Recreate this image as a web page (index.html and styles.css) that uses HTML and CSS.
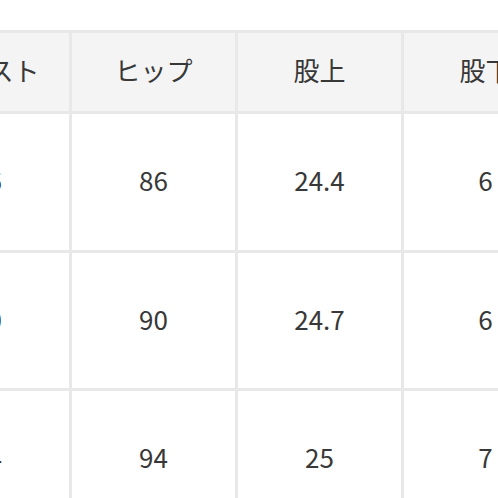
FILE: index.html
```html
<!DOCTYPE html>
<html lang="ja">
<head>
<meta charset="utf-8">
<link rel="stylesheet" href="styles.css">
</head>
<body>
<div class="viewport">
  <div class="size-table">
    <div class="cell head">ウエスト</div>
    <div class="cell head">ヒップ</div>
    <div class="cell head">股上</div>
    <div class="cell head">股下</div>
    <div class="cell">66</div>
    <div class="cell">86</div>
    <div class="cell">24.4</div>
    <div class="cell">6</div>
    <div class="cell">70</div>
    <div class="cell">90</div>
    <div class="cell">24.7</div>
    <div class="cell">6</div>
    <div class="cell">74</div>
    <div class="cell">94</div>
    <div class="cell">25</div>
    <div class="cell">7</div>
  </div>
</div>
</body>
</html>
```

FILE: styles.css
```css
html, body {
  margin: 0;
  padding: 0;
  background: #ffffff;
}
.viewport {
  width: 498px;
  height: 498px;
  overflow: hidden;
  padding-top: 30px;
  box-sizing: border-box;
}
.size-table {
  display: grid;
  grid-template-columns: repeat(4, 163px);
  grid-template-rows: 78px 136px 135px 135px;
  gap: 3px;
  padding: 3px;
  width: max-content;
  margin-left: -97px;
  background: #e8e8e8;
}
.cell {
  background: #ffffff;
  display: flex;
  align-items: center;
  justify-content: center;
  padding-bottom: 5px;
  box-sizing: border-box;
  font-family: "Noto Sans CJK JP", "Noto Sans", sans-serif;
  font-size: 26px;
  color: #383838;
}
.head {
  background: #f4f4f4;
}
```
